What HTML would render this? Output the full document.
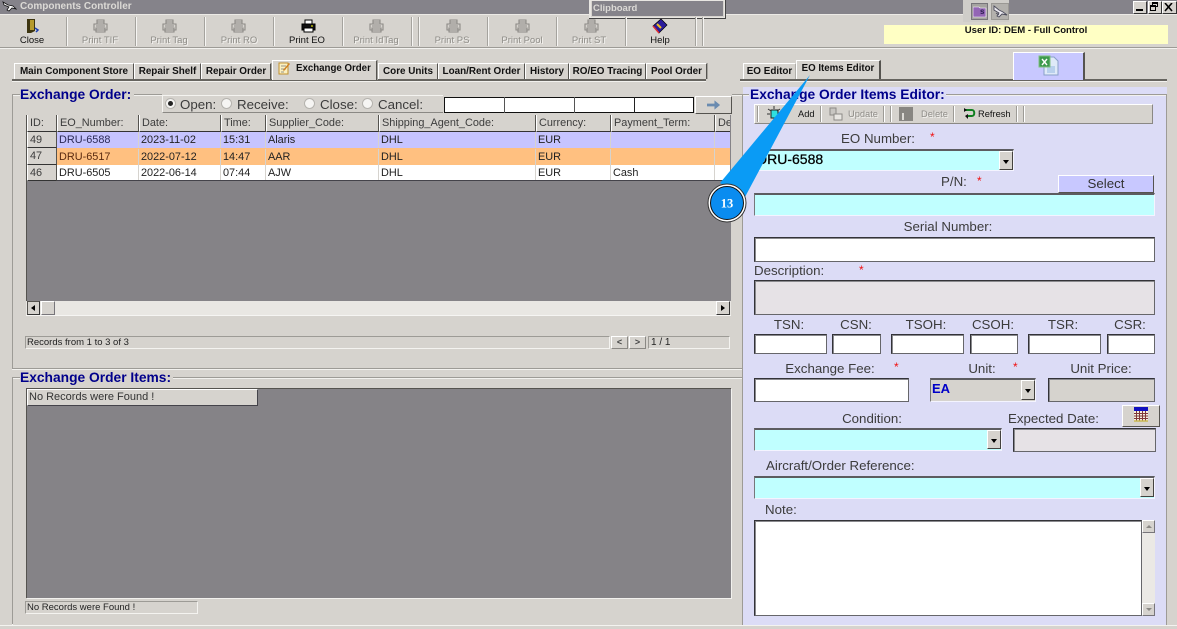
<!DOCTYPE html>
<html><head><meta charset="utf-8"><style>
html,body{margin:0;padding:0}
body{width:1177px;height:629px;position:relative;overflow:hidden;background:#d6d3ce;font-family:"Liberation Sans",sans-serif;color:#222}
div,span.a,svg.a{position:absolute}
.t{white-space:nowrap;line-height:14px;height:14px}
.tb{font-size:9.500px;top:34px;transform:translateX(-50%);color:#111;text-align:center}
.dis{color:#8f8d88;text-shadow:1px 1px 0 #f4f3f0}
.sep{top:17px;width:1px;height:29px;background:#a5a39e;border-right:1px solid #f6f5f3}
.tab{top:63px;height:15px;background:#d6d3ce;border-left:1px solid #fff;border-top:1px solid #fff;border-right:1px solid #55534f;font:bold 9.900px/16px "Liberation Sans",sans-serif;color:#111;text-align:center;white-space:nowrap;box-shadow:1px 0 0 #a5a39e}
.leg{font:bold 13.800px/16px "Liberation Sans",sans-serif;color:#00008b;white-space:nowrap}
.gl{background:#9d9b96;box-shadow:0 1px 0 #f2f1ee}
.lab{font-size:13.300px;line-height:14px;color:#3c3c3c;white-space:nowrap}
.ctr{transform:translateX(-50%)}
.star{color:#f01010;font-size:12px;line-height:12px}
.in{box-sizing:border-box;border:1px solid #333338;border-right-color:#66666a;border-bottom-color:#66666a;background:#fff;box-shadow:inset 1px 1px 0 #8a8a8e}
.sl{box-sizing:border-box;border:1px solid #f4f4ff;border-top:2px solid #5c5c60;border-left:1px solid #77777a;background:#c0ffff}
.h{top:115px;height:17px;box-sizing:border-box;background:#d6d3ce;border-left:1px solid #fff;border-right:1px solid #55534f;border-bottom:1px solid #333;font-size:10.900px;line-height:16px;color:#3c3c3c;padding-left:2px;white-space:nowrap;overflow:hidden}
.c{font-size:10.900px;line-height:16px;color:#222;white-space:nowrap;overflow:hidden;padding-left:2px;box-sizing:border-box;border-right:1px solid #d6d3ce}
.ddb{box-sizing:border-box;background:#d6d3ce;border:1px solid;border-color:#fff #44423f #44423f #fff}
.ddb:after{content:"";position:absolute;left:50%;top:50%;margin:-1px 0 0 -3px;border:3px solid transparent;border-top:4px solid #000;border-bottom:0}
.r{width:9px;height:9px;border-radius:50%;background:#f6f5f3;border:1px solid #b5b3ae;top:98px}
.br{box-sizing:border-box;border:1px solid;border-color:#9d9b96 #f4f3f0 #f4f3f0 #9d9b96;font-size:9.500px;line-height:11px;padding-left:1px;color:#222;white-space:nowrap}
</style></head><body>

<!-- title bar -->
<div style="left:0;top:0;width:1177px;height:14px;background:#85838a"></div>
<div style="left:0;top:14px;width:1177px;height:1px;background:#eceae6"></div>
<svg class="a" style="left:2px;top:0" width="15" height="14" viewBox="0 0 15 14"><path d="M1 2l5 3 5 1 3 3-4-1-3 3-2-1 2-3-5-2z" fill="#fff" stroke="#111" stroke-width=".8"/></svg>
<div class="t" style="left:20px;top:0;font:bold 10px/14px 'Liberation Sans',sans-serif;color:#dcdad6">Components Controller</div>

<!-- clipboard popup -->
<div style="left:589px;top:0;width:137px;height:19px;background:#e8e6e2;box-sizing:border-box;border-right:1px solid #444;border-bottom:1px solid #444"></div>
<div style="left:591px;top:1px;width:133px;height:16px;background:#85838a;font:bold 9.500px/16px 'Liberation Sans',sans-serif;color:#dcdad6;padding-left:1px;box-sizing:border-box;border:1px solid #d6d3ce;border-top:0">Clipboard</div>

<!-- window icons -->
<div style="left:963px;top:0;width:46px;height:22px;background:#cfcdc9"></div>
<div style="left:971px;top:3px;width:17px;height:17px;background:#a5a3a0;border:1px solid #77757a;box-sizing:border-box"></div>
<svg class="a" style="left:973px;top:5px" width="14" height="13" viewBox="0 0 14 13"><path d="M0 2h6l1 1h6v9H0z" fill="#9365b5" stroke="#fff" stroke-width=".6"/></svg>
<div class="t" style="left:980px;top:5px;font:bold 8px/14px 'Liberation Sans',sans-serif;color:#2a1c50">s</div>
<div style="left:991px;top:3px;width:18px;height:17px;background:#b3b1ad;border:1px solid #9a9894;box-sizing:border-box"></div>
<svg class="a" style="left:992px;top:4px" width="16" height="15" viewBox="0 0 16 15"><path d="M2 2l5 4 4 2 4 3-5-1-3 3-2-1 2-3-5-3zM4 9l3 2" fill="#eceaf0" stroke="#4a4a5a" stroke-width=".9"/></svg>
<div style="left:1133px;top:1px;width:12px;height:11px;background:#d6d3ce;border:1px solid;border-color:#fff #333 #333 #fff"></div>
<div style="left:1136px;top:9px;width:7px;height:2px;background:#000"></div>
<div style="left:1148px;top:1px;width:12px;height:11px;background:#d6d3ce;border:1px solid;border-color:#fff #333 #333 #fff"></div>
<div style="left:1152px;top:2px;width:6px;height:5px;border:1px solid #000;border-top-width:2px;box-sizing:border-box"></div>
<div style="left:1150px;top:5px;width:6px;height:6px;border:1px solid #000;border-top-width:2px;box-sizing:border-box;background:#d6d3ce"></div>
<div style="left:1162px;top:1px;width:13px;height:11px;background:#d6d3ce;border:1px solid;border-color:#fff #333 #333 #fff"></div>
<svg class="a" style="left:1164px;top:3px" width="10" height="9" viewBox="0 0 10 9"><path d="M1 0l7 8M8 0L1 8" stroke="#000" stroke-width="1.6"/></svg>

<!-- toolbar -->
<div style="left:0;top:47px;width:1177px;height:1px;background:#9d9b96"></div>
<div style="left:0;top:48px;width:1177px;height:1px;background:#f2f1ee"></div>
<div class="sep" style="left:66px"></div><div class="sep" style="left:135px"></div><div class="sep" style="left:204px"></div><div class="sep" style="left:273px"></div><div class="sep" style="left:342px"></div><div class="sep" style="left:411px"></div><div class="sep" style="left:418px"></div><div class="sep" style="left:487px"></div><div class="sep" style="left:556px"></div><div class="sep" style="left:625px"></div><div class="sep" style="left:695px"></div><div class="sep" style="left:702px"></div>

<svg class="a" style="left:26px;top:18px" width="14" height="16" viewBox="0 0 14 16"><path d="M1 1h8v12l-4 2H1z" fill="#3d3510"/><path d="M4 2h4v10H4z" fill="#b59a2c"/><path d="M9 10l3 2-2 2" fill="none" stroke="#1b3fb0" stroke-width="1.5"/></svg>
<svg class="a" style="left:93px;top:19px" width="15" height="14" viewBox="0 0 15 14"><path d="M4 1h7v4H4zM1 5h13v6H1zM3 9h9v4H3z" fill="#d6d3ce" stroke="#8c8a86" stroke-width="1.1"/><path d="M4 3h7M3 7h9" stroke="#8c8a86"/></svg>
<svg class="a" style="left:162px;top:19px" width="15" height="14" viewBox="0 0 15 14"><path d="M4 1h7v4H4zM1 5h13v6H1zM3 9h9v4H3z" fill="#d6d3ce" stroke="#8c8a86" stroke-width="1.1"/><path d="M4 3h7M3 7h9" stroke="#8c8a86"/></svg>
<svg class="a" style="left:231px;top:19px" width="15" height="14" viewBox="0 0 15 14"><path d="M4 1h7v4H4zM1 5h13v6H1zM3 9h9v4H3z" fill="#d6d3ce" stroke="#8c8a86" stroke-width="1.1"/><path d="M4 3h7M3 7h9" stroke="#8c8a86"/></svg>
<svg class="a" style="left:301px;top:19px" width="15" height="14" viewBox="0 0 15 14"><path d="M4 1h7v4H4z" fill="#fff" stroke="#000"/><path d="M1 5h13v6H1z" fill="#111" stroke="#000"/><path d="M3 9h9v4H3z" fill="#fff" stroke="#000"/><path d="M10 7h2" stroke="#ff0"/></svg>
<svg class="a" style="left:369px;top:19px" width="15" height="14" viewBox="0 0 15 14"><path d="M4 1h7v4H4zM1 5h13v6H1zM3 9h9v4H3z" fill="#d6d3ce" stroke="#8c8a86" stroke-width="1.1"/><path d="M4 3h7M3 7h9" stroke="#8c8a86"/></svg>
<svg class="a" style="left:446px;top:19px" width="15" height="14" viewBox="0 0 15 14"><path d="M4 1h7v4H4zM1 5h13v6H1zM3 9h9v4H3z" fill="#d6d3ce" stroke="#8c8a86" stroke-width="1.1"/><path d="M4 3h7M3 7h9" stroke="#8c8a86"/></svg>
<svg class="a" style="left:515px;top:19px" width="15" height="14" viewBox="0 0 15 14"><path d="M4 1h7v4H4zM1 5h13v6H1zM3 9h9v4H3z" fill="#d6d3ce" stroke="#8c8a86" stroke-width="1.1"/><path d="M4 3h7M3 7h9" stroke="#8c8a86"/></svg>
<svg class="a" style="left:584px;top:19px" width="15" height="14" viewBox="0 0 15 14"><path d="M4 1h7v4H4zM1 5h13v6H1zM3 9h9v4H3z" fill="#d6d3ce" stroke="#8c8a86" stroke-width="1.1"/><path d="M4 3h7M3 7h9" stroke="#8c8a86"/></svg>
<svg class="a" style="left:652px;top:18px" width="16" height="16" viewBox="0 0 16 16"><path d="M1 8l8-7 6 6-8 8z" fill="#2a1c9c" stroke="#000" stroke-width=".7"/><path d="M5 6l4 4" stroke="#f0c020" stroke-width="2"/><path d="M1 8l6 7" stroke="#e03030" stroke-width="1.4"/></svg>

<div class="t tb" style="left:32px">Close</div>
<div class="t tb dis" style="left:100px">Print TIF</div>
<div class="t tb dis" style="left:169px">Print Tag</div>
<div class="t tb dis" style="left:239px">Print RO</div>
<div class="t tb" style="left:307px">Print EO</div>
<div class="t tb dis" style="left:376px">Print IdTag</div>
<div class="t tb dis" style="left:452px">Print PS</div>
<div class="t tb dis" style="left:522px">Print Pool</div>
<div class="t tb dis" style="left:589px">Print ST</div>
<div class="t tb" style="left:660px">Help</div>

<!-- user box -->
<div style="left:884px;top:25px;width:284px;height:19px;background:#ffffc4;text-align:center;font:bold 9.550px/12px 'Liberation Sans',sans-serif;color:#111">User ID: DEM - Full Control</div>

<!-- tabs -->
<div style="left:12px;top:79px;width:694px;height:2px;background:#66645f"></div>
<div style="left:12px;top:81px;width:694px;height:1px;background:#f2f1ee"></div>
<div class="tab" style="left:14px;width:118px">Main Component Store</div>
<div class="tab" style="left:134px;width:65px">Repair Shelf</div>
<div class="tab" style="left:201px;width:68px">Repair Order</div>
<div class="tab" style="left:272px;top:60px;height:19px;width:103px;text-align:left;line-height:16px;font-size:9.700px"><span style="margin-left:23px">Exchange Order</span></div>
<svg class="a" style="left:278px;top:61px" width="13" height="14" viewBox="0 0 13 14"><path d="M1 2h9v11H1z" fill="#fbf0c0" stroke="#c09030"/><path d="M3 5h5M3 8h5M3 11h3" stroke="#777" stroke-width=".8"/><path d="M5 9l6-7 1 1-6 7z" fill="#d08020"/></svg>
<div class="tab" style="left:378px;width:58px">Core Units</div>
<div class="tab" style="left:438px;width:85px">Loan/Rent Order</div>
<div class="tab" style="left:525px;width:42px">History</div>
<div class="tab" style="left:569px;width:75px">RO/EO Tracing</div>
<div class="tab" style="left:646px;width:59px">Pool Order</div>

<div style="left:740px;top:79px;width:427px;height:2px;background:#66645f"></div>
<div style="left:740px;top:81px;width:427px;height:1px;background:#f2f1ee"></div>
<div class="tab" style="left:743px;width:51px;border-right:1px solid #b0aea9;box-shadow:none">EO Editor</div>
<div class="tab" style="left:796px;top:60px;height:18px;width:82px;line-height:15px;font-size:9.700px;border-right:2px solid #55534f;box-shadow:none">EO Items Editor</div>
<div style="left:1013px;top:52px;width:72px;height:28px;box-sizing:border-box;background:#c8c8ff;border-top:1px solid #fff;border-left:1px solid #fff;border-right:2px solid #55534f"></div>
<svg class="a" style="left:1038px;top:55px" width="21" height="21" viewBox="0 0 21 21"><path d="M6 2h10l4 4v14H6z" fill="#dfeaf8" stroke="#8aa0c8"/><path d="M9 11h8v7H9z" fill="#b8d0ec"/><path d="M1 1h11v11H1z" fill="#3d9a4e" stroke="#7fbf80"/><path d="M4 4l5 6M9 4l-5 6" stroke="#fff" stroke-width="1.4"/></svg>

<!-- Exchange Order group -->
<div class="gl" style="left:12px;top:94px;width:8px;height:1px"></div>
<div class="gl" style="left:134px;top:94px;width:28px;height:1px"></div>
<div class="gl" style="left:732px;top:94px;width:10px;height:1px"></div>
<div class="gl" style="left:12px;top:94px;width:1px;height:275px"></div>
<div class="gl" style="left:12px;top:368px;width:730px;height:1px"></div>
<div class="gl" style="left:742px;top:94px;width:1px;height:531px;box-shadow:none"></div>
<div class="leg" style="left:20px;top:87px">Exchange Order:</div>

<div style="left:162px;top:95px;width:281px;height:18px;box-sizing:border-box;border-top:1px solid #f4f3f0;border-left:1px solid #f4f3f0;border-bottom:1px solid #8a8884"></div>
<div class="r" style="left:165px;top:98px"></div><div style="left:168px;top:101px;width:5px;height:5px;border-radius:50%;background:#222"></div>
<div class="lab" style="left:180px;top:98px">Open:</div>
<div class="r" style="left:221px"></div><div class="lab" style="left:237px;top:98px">Receive:</div>
<div class="r" style="left:304px"></div><div class="lab" style="left:320px;top:98px">Close:</div>
<div class="r" style="left:362px"></div><div class="lab" style="left:378px;top:98px">Cancel:</div>

<div style="left:444px;top:97px;width:250px;height:16px;box-sizing:border-box;border:1px solid #111;background:#fff"></div>
<div style="left:504px;top:97px;width:1px;height:16px;background:#555"></div>
<div style="left:574px;top:97px;width:1px;height:16px;background:#555"></div>
<div style="left:634px;top:97px;width:1px;height:16px;background:#222"></div>
<div style="left:695px;top:96px;width:37px;height:18px;box-sizing:border-box;background:#d6d3ce;border:1px solid;border-color:#fff #55534f #55534f #fff"></div>
<svg class="a" style="left:707px;top:100px" width="14" height="10" viewBox="0 0 15 10"><path d="M0 3.500h8V0l6 5-6 5V6.500H0z" fill="#6a8bb0"/></svg>

<!-- grid -->
<div style="left:26px;top:115px;width:705px;height:187px;background:#858387;border-left:1px solid #55534f;box-sizing:border-box"></div>
<div class="h" style="left:27px;width:30px">ID:</div>
<div class="h" style="left:57px;width:82px">EO_Number:</div>
<div class="h" style="left:139px;width:82px">Date:</div>
<div class="h" style="left:221px;width:45px">Time:</div>
<div class="h" style="left:266px;width:113px">Supplier_Code:</div>
<div class="h" style="left:379px;width:157px">Shipping_Agent_Code:</div>
<div class="h" style="left:536px;width:75px">Currency:</div>
<div class="h" style="left:611px;width:104px">Payment_Term:</div>
<div class="h" style="left:715px;width:15px;border-right:0">De</div>

<div style="left:57px;top:132px;width:673px;height:16px;background:#c6c4ff"></div>
<div style="left:57px;top:148px;width:673px;height:17px;background:#ffc080"></div>
<div style="left:57px;top:165px;width:673px;height:15px;background:#fff"></div>
<div style="left:27px;top:180px;width:703px;height:1px;background:#44434a"></div>
<div class="h" style="left:27px;top:132px;width:30px;height:16px">49</div>
<div class="h" style="left:27px;top:148px;width:30px;height:17px">47</div>
<div class="h" style="left:27px;top:165px;width:30px;height:16px">46</div>

<div class="c" style="left:57px;top:132px;width:82px;height:16px;color:#2a2a55">DRU-6588</div><div class="c" style="left:139px;top:132px;width:82px;height:16px">2023-11-02</div><div class="c" style="left:221px;top:132px;width:45px;height:16px">15:31</div><div class="c" style="left:266px;top:132px;width:113px;height:16px">Alaris</div><div class="c" style="left:379px;top:132px;width:157px;height:16px">DHL</div><div class="c" style="left:536px;top:132px;width:75px;height:16px">EUR</div><div class="c" style="left:611px;top:132px;width:104px;height:16px"></div>
<div class="c" style="left:57px;top:149px;width:82px;height:16px;color:#5a2a10">DRU-6517</div><div class="c" style="left:139px;top:149px;width:82px;height:16px">2022-07-12</div><div class="c" style="left:221px;top:149px;width:45px;height:16px">14:47</div><div class="c" style="left:266px;top:149px;width:113px;height:16px">AAR</div><div class="c" style="left:379px;top:149px;width:157px;height:16px">DHL</div><div class="c" style="left:536px;top:149px;width:75px;height:16px">EUR</div><div class="c" style="left:611px;top:149px;width:104px;height:16px"></div>
<div class="c" style="left:57px;top:165px;width:82px;height:15px">DRU-6505</div><div class="c" style="left:139px;top:165px;width:82px;height:15px">2022-06-14</div><div class="c" style="left:221px;top:165px;width:45px;height:15px">07:44</div><div class="c" style="left:266px;top:165px;width:113px;height:15px">AJW</div><div class="c" style="left:379px;top:165px;width:157px;height:15px">DHL</div><div class="c" style="left:536px;top:165px;width:75px;height:15px">EUR</div><div class="c" style="left:611px;top:165px;width:104px;height:15px">Cash</div>

<!-- h scrollbar -->
<div style="left:26px;top:301px;width:705px;height:15px;background:#e9e7e3;border-bottom:1px solid #f6f5f3;box-sizing:border-box"></div>
<div style="left:27px;top:301px;width:13px;height:14px;background:#d6d3ce;box-sizing:border-box;border:1px solid;border-color:#55534f #333 #333 #55534f"></div>
<div style="left:31px;top:305px;width:0;height:0;border:3px solid transparent;border-right:4px solid #000;border-left:0"></div>
<div style="left:41px;top:301px;width:14px;height:14px;background:#d6d3ce;box-sizing:border-box;border:1px solid;border-color:#fff #77757a #77757a #fff"></div>
<div style="left:716px;top:301px;width:14px;height:14px;background:#d6d3ce;box-sizing:border-box;border:1px solid;border-color:#fff #333 #333 #fff"></div>
<div style="left:721px;top:305px;width:0;height:0;border:3px solid transparent;border-left:4px solid #000;border-right:0"></div>

<!-- records -->
<div class="br" style="left:25px;top:336px;width:585px;height:13px">Records from 1 to 3 of 3</div>
<div style="left:611px;top:336px;width:17px;height:13px;box-sizing:border-box;border:1px solid;border-color:#fff #8a8884 #8a8884 #fff;font:bold 9px/10px 'Liberation Sans',sans-serif;text-align:center;color:#444">&lt;</div>
<div style="left:629px;top:336px;width:17px;height:13px;box-sizing:border-box;border:1px solid;border-color:#fff #8a8884 #8a8884 #fff;font:bold 9px/10px 'Liberation Sans',sans-serif;text-align:center;color:#444">&gt;</div>
<div class="br" style="left:648px;top:336px;width:82px;height:13px;font-size:10px;padding-left:2px">1 / 1</div>

<!-- Items group -->
<div class="gl" style="left:12px;top:377px;width:8px;height:1px"></div>
<div class="gl" style="left:173px;top:377px;width:569px;height:1px"></div>
<div class="gl" style="left:12px;top:377px;width:1px;height:247px"></div>
<div class="leg" style="left:20px;top:370px">Exchange Order Items:</div>
<div style="left:26px;top:388px;width:705px;height:210px;background:#858387;box-sizing:border-box;border-top:1px solid #55534f;border-left:1px solid #55534f;box-shadow:1px 1px 0 #f2f1ee"></div>
<div style="left:27px;top:389px;width:231px;height:17px;box-sizing:border-box;background:#d6d3ce;border:1px solid;border-color:#fff #44434a #44434a #fff;font-size:11px;line-height:15px;padding-left:1px;color:#333;white-space:nowrap">No Records were Found !</div>
<div class="br" style="left:25px;top:601px;width:173px;height:13px">No Records were Found !</div>

<!-- bottom line -->
<div style="left:0;top:625px;width:1177px;height:1px;background:#f4f3f0"></div>

<!-- Right panel -->
<div style="left:743px;top:87px;width:424px;height:538px;background:#dcdcf6"></div>
<div class="gl" style="left:743px;top:94px;width:6px;height:1px"></div>
<div class="gl" style="left:946px;top:94px;width:220px;height:1px"></div>
<div class="gl" style="left:1166px;top:94px;width:1px;height:531px"></div>
<div class="leg" style="left:750px;top:87px">Exchange Order Items Editor:</div>

<div style="left:754px;top:104px;width:399px;height:20px;box-sizing:border-box;background:#d6d3ce;border:1px solid;border-color:#fff #8a8884 #8a8884 #fff"></div>
<div style="left:757px;top:106px;width:1px;height:16px;background:#9d9b96;border-right:1px solid #fff"></div>
<svg class="a" style="left:766px;top:106px" width="16" height="15" viewBox="0 0 16 15"><path d="M5 4h7v8H5z" fill="#30e0e0" stroke="#222"/><path d="M8 0v3M2 3l3 2M14 3l-3 2M1 8h3" stroke="#333"/></svg>
<div class="t" style="left:798px;top:107px;font-size:9.300px;color:#111">Add</div>
<div style="left:820px;top:106px;width:1px;height:16px;background:#9d9b96;border-right:1px solid #fff"></div>
<svg class="a" style="left:829px;top:107px" width="14" height="14" viewBox="0 0 14 14"><path d="M1 1h6v7H1z" fill="#c8c6c2" stroke="#8c8a86"/><path d="M5 7h8v6H5z" fill="#e8e6e2" stroke="#8c8a86"/></svg>
<div class="t dis" style="left:848px;top:107px;font-size:9.300px">Update</div>
<div style="left:883px;top:106px;width:1px;height:16px;background:#9d9b96;border-right:1px solid #fff"></div>
<div style="left:890px;top:106px;width:1px;height:16px;background:#9d9b96;border-right:1px solid #fff"></div>
<div style="left:899px;top:107px;width:14px;height:14px;background:#888682"></div>
<div style="left:902px;top:113px;width:2px;height:7px;background:#dcdad6"></div>
<div class="t dis" style="left:921px;top:107px;font-size:9.300px">Delete</div>
<div style="left:953px;top:106px;width:1px;height:16px;background:#9d9b96;border-right:1px solid #fff"></div>
<svg class="a" style="left:963px;top:107px" width="13" height="13" viewBox="0 0 13 13"><path d="M2 3h7c3 0 3 6 0 6H4" fill="none" stroke="#108020" stroke-width="2"/><path d="M1 1l3 2-3 2zM5 7L2 9l3 3z" fill="#111"/></svg>
<div class="t" style="left:978px;top:107px;font-size:9.300px;color:#111">Refresh</div>
<div style="left:1016px;top:106px;width:1px;height:16px;background:#9d9b96;border-right:1px solid #fff"></div>
<div style="left:1023px;top:106px;width:1px;height:16px;background:#9d9b96;border-right:1px solid #fff"></div>

<div class="lab ctr" style="left:878px;top:132px">EO Number:</div>
<div class="star" style="left:930px;top:131px">*</div>
<div class="sl" style="left:754px;top:149px;width:260px;height:22px;font-size:14px;line-height:17px;color:#000;padding-left:2px;white-space:nowrap;-webkit-text-stroke:.25px #000">DRU-6588</div>
<div class="ddb" style="left:999px;top:151px;width:14px;height:19px"></div>

<div class="lab" style="left:941px;top:175px">P/N:</div>
<div class="star" style="left:977px;top:175px">*</div>
<div style="left:1058px;top:175px;width:96px;height:18px;box-sizing:border-box;background:#c8c8ff;border:1px solid;border-color:#fff #55534f #55534f #fff;font-size:13.300px;line-height:16px;text-align:center;color:#333">Select</div>
<div class="sl" style="left:754px;top:193px;width:401px;height:23px"></div>

<div class="lab ctr" style="left:948px;top:220px">Serial Number:</div>
<div class="in" style="left:754px;top:237px;width:401px;height:25px"></div>

<div class="lab" style="left:754px;top:264px">Description:</div>
<div class="star" style="left:859px;top:264px">*</div>
<div class="in" style="left:754px;top:280px;width:401px;height:35px;background:#e6e2e6"></div>

<div class="lab ctr" style="left:789px;top:318px">TSN:</div>
<div class="lab ctr" style="left:856px;top:318px">CSN:</div>
<div class="lab ctr" style="left:926px;top:318px">TSOH:</div>
<div class="lab ctr" style="left:993px;top:318px">CSOH:</div>
<div class="lab ctr" style="left:1063px;top:318px">TSR:</div>
<div class="lab ctr" style="left:1130px;top:318px">CSR:</div>
<div class="in" style="left:754px;top:334px;width:73px;height:20px"></div>
<div class="in" style="left:832px;top:334px;width:49px;height:20px"></div>
<div class="in" style="left:891px;top:334px;width:73px;height:20px"></div>
<div class="in" style="left:970px;top:334px;width:48px;height:20px"></div>
<div class="in" style="left:1028px;top:334px;width:73px;height:20px"></div>
<div class="in" style="left:1107px;top:334px;width:48px;height:20px"></div>

<div class="lab ctr" style="left:830px;top:362px">Exchange Fee:</div>
<div class="star" style="left:894px;top:361px">*</div>
<div class="lab ctr" style="left:982px;top:362px">Unit:</div>
<div class="star" style="left:1013px;top:361px">*</div>
<div class="lab ctr" style="left:1101px;top:362px">Unit Price:</div>
<div class="in" style="left:754px;top:378px;width:155px;height:24px"></div>
<div class="sl" style="left:930px;top:378px;width:106px;height:24px;background:#d6d3ce;font:bold 13px/18px 'Liberation Sans',sans-serif;color:#0000c8;padding-left:1px">EA</div>
<div class="ddb" style="left:1021px;top:380px;width:14px;height:20px"></div>
<div class="in" style="left:1048px;top:378px;width:107px;height:24px;background:#d6d3ce"></div>

<div style="left:1122px;top:405px;width:38px;height:22px;box-sizing:border-box;background:#d6d3ce;border:1px solid;border-color:#fff #55534f #55534f #fff"></div>
<svg class="a" style="left:1134px;top:407px" width="14" height="15" viewBox="0 0 14 15"><path d="M0 0h14v4H0z" fill="#1010c0"/><path d="M0 4h14v10H0z" fill="#f4f0e0"/><path d="M0 6.500h14M0 9h14M0 11.500h14M2.500 4v10M5.500 4v10M8.500 4v10M11.500 4v10" stroke="#803838"/><path d="M0 14h14" stroke="#c8b850" stroke-width="1.500"/></svg>

<div class="lab ctr" style="left:872px;top:412px">Condition:</div>
<div class="lab" style="left:1008px;top:412px">Expected Date:</div>
<div class="sl" style="left:754px;top:428px;width:248px;height:23px"></div>
<div class="ddb" style="left:987px;top:430px;width:14px;height:19px"></div>
<div class="in" style="left:1013px;top:428px;width:143px;height:24px;background:#e6e2e6"></div>

<div class="lab" style="left:766px;top:459px">Aircraft/Order Reference:</div>
<div class="sl" style="left:754px;top:476px;width:401px;height:23px"></div>
<div class="ddb" style="left:1140px;top:478px;width:14px;height:19px"></div>

<div class="lab" style="left:765px;top:503px">Note:</div>
<div class="in" style="left:754px;top:520px;width:388px;height:96px"></div>
<div style="left:1142px;top:520px;width:13px;height:96px;background:#ebe9e5"></div>
<div style="left:1142px;top:520px;width:13px;height:13px;background:#d6d3ce;box-sizing:border-box;border:1px solid;border-color:#fff #77757a #77757a #fff"></div>
<div style="left:1146px;top:525px;width:0;height:0;border:3px solid transparent;border-bottom:3px solid #8a8884;border-top:0"></div>
<div style="left:1142px;top:603px;width:13px;height:13px;background:#d6d3ce;box-sizing:border-box;border:1px solid;border-color:#fff #77757a #77757a #fff"></div>
<div style="left:1146px;top:608px;width:0;height:0;border:3px solid transparent;border-top:3px solid #8a8884;border-bottom:0"></div>

<!-- callout -->
<svg class="a" style="left:0;top:0" width="1177" height="629" viewBox="0 0 1177 629">
<path d="M810 75L720 183L745 197Z" fill="#0a9bf5"/>
<circle cx="727" cy="203" r="19" fill="#fff" stroke="#333" stroke-width="1"/>
<circle cx="727" cy="203" r="16.500" fill="#0a8cf0" stroke="#111" stroke-width="1"/>
<text x="727" y="207.500" text-anchor="middle" fill="#fff" font-family="'Liberation Serif',serif" font-weight="bold" font-size="12.500">13</text>
</svg>
</body></html>
